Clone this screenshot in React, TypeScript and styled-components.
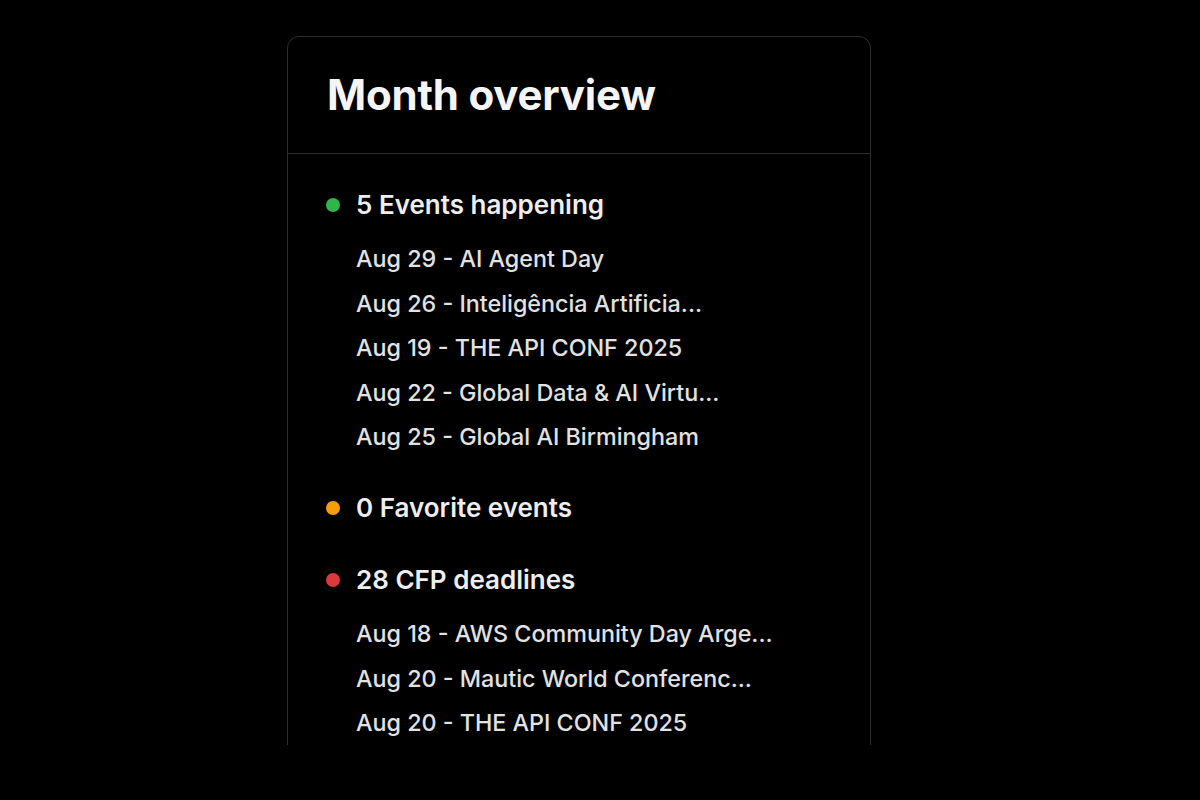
import React from "react";
import styled, { createGlobalStyle } from "styled-components";

const Global = createGlobalStyle`
  html, body { margin: 0; padding: 0; background: #000; }
  body { font-family: Inter, "Noto Sans", sans-serif; color: #f2f2f2; -webkit-font-smoothing: antialiased; }
`;

const Page = styled.div`
  display: flex;
  justify-content: center;
  padding-top: 36px;
  padding-right: 42px;
  height: 800px;
  box-sizing: border-box;
`;

const Clip = styled.div`
  width: 584px;
  height: 709px;
  overflow: hidden;
`;

const Card = styled.section`
  box-sizing: border-box;
  width: 584px;
  border: 1px solid #2e2e2e;
  border-radius: 12px;
  background: #000;
`;

const Header = styled.header`
  padding: 33px 39px 33px;
  border-bottom: 1px solid #2e2e2e;
`;

const Title = styled.h2`
  margin: 0;
  font-size: 42px;
  line-height: 50px;
  font-weight: 700;
  letter-spacing: -0.2px;
  color: #f5f5f5;
`;

const Body = styled.div`
  padding: 35px 38px 40px;
  display: flex;
  flex-direction: column;
  gap: 40px;
`;

const Section = styled.div`
  display: flex;
  flex-direction: column;
`;

const HeadingRow = styled.div`
  display: flex;
  align-items: center;
  gap: 16px;
  height: 32px;
`;

const Dot = styled.span<{ $color: string }>`
  width: 14px;
  height: 14px;
  border-radius: 50%;
  background: ${(p) => p.$color};
  flex-shrink: 0;
`;

const Heading = styled.h3`
  margin: 0;
  font-size: 26px;
  line-height: 32px;
  font-weight: 600;
  color: #eeeeee;
`;

const List = styled.ul`
  list-style: none;
  margin: 23px 0 0;
  padding: 0 0 0 30px;
  display: flex;
  flex-direction: column;
  gap: 14.5px;
`;

const Item = styled.li`
  font-size: 23.3px;
  line-height: 30px;
  font-weight: 500;
  color: #e2e2e2;
  white-space: nowrap;
`;

type Group = { color: string; label: string; items: string[] };

const groups: Group[] = [
  {
    color: "#2fb64b",
    label: "5 Events happening",
    items: [
      "Aug 29 - AI Agent Day",
      "Aug 26 - Inteligência Artificia...",
      "Aug 19 - THE API CONF 2025",
      "Aug 22 - Global Data & AI Virtu...",
      "Aug 25 - Global AI Birmingham",
    ],
  },
  { color: "#f59e0b", label: "0 Favorite events", items: [] },
  {
    color: "#dc3a3a",
    label: "28 CFP deadlines",
    items: [
      "Aug 18 - AWS Community Day Arge...",
      "Aug 20 - Mautic World Conferenc...",
      "Aug 20 - THE API CONF 2025",
    ],
  },
];

export default function App() {
  return (
    <>
      <Global />
      <Page>
        <Clip>
          <Card>
            <Header>
              <Title>Month overview</Title>
            </Header>
            <Body>
              {groups.map((g) => (
                <Section key={g.label}>
                  <HeadingRow>
                    <Dot $color={g.color} />
                    <Heading>{g.label}</Heading>
                  </HeadingRow>
                  {g.items.length > 0 && (
                    <List>
                      {g.items.map((it, i) => (
                        <Item key={i}>{it}</Item>
                      ))}
                    </List>
                  )}
                </Section>
              ))}
            </Body>
          </Card>
        </Clip>
      </Page>
    </>
  );
}
